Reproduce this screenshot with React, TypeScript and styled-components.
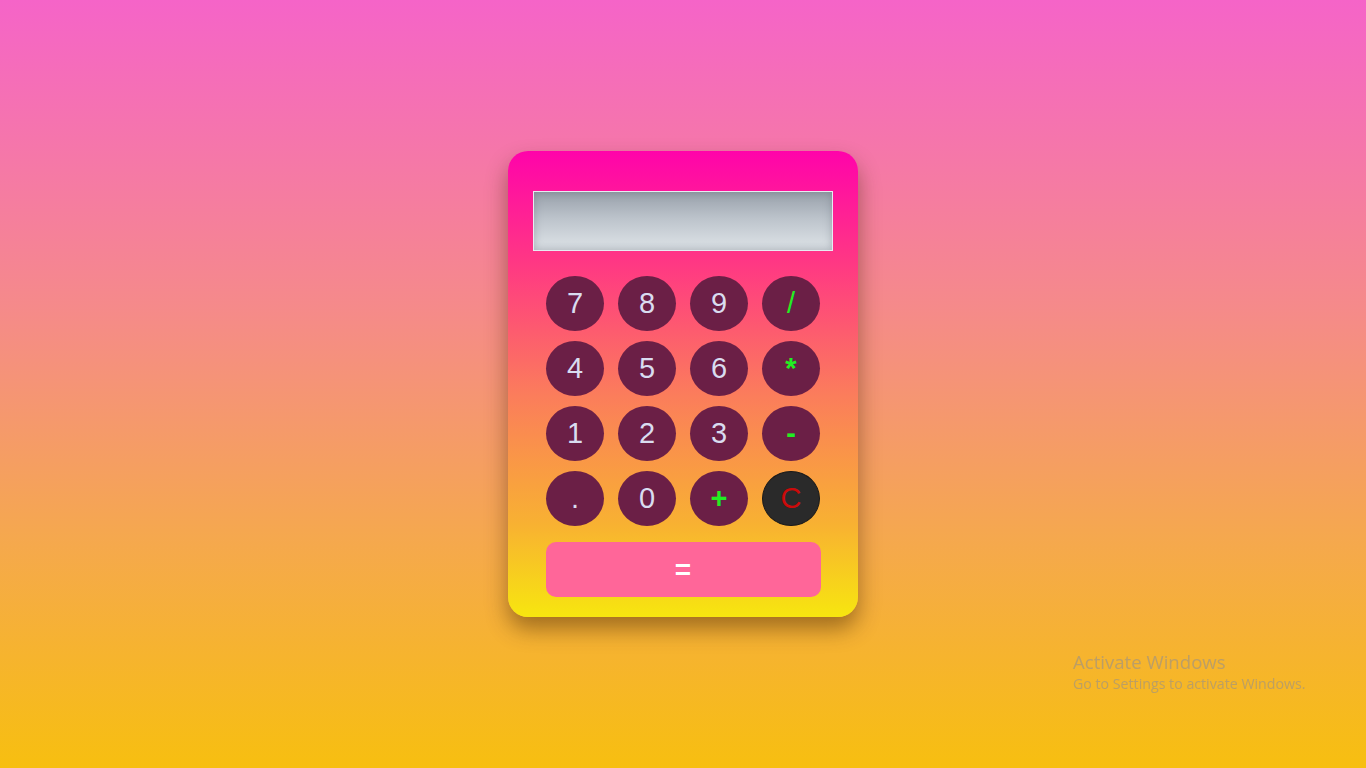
import React from "react";
import styled, { createGlobalStyle } from "styled-components";

const Global = createGlobalStyle`
  html, body { margin: 0; padding: 0; height: 100%; }
  body {
    font-family: "Liberation Sans", Arial, sans-serif;
    background: linear-gradient(180deg, #f564c8 0%, #f58a8a 40%, #f5a84e 70%, #f7bf10 100%);
    min-height: 100vh;
  }
  #root { height: 100vh; }
`;

const Page = styled.div`
  height: 100vh;
  display: flex;
  align-items: center;
  justify-content: center;
`;

const Calc = styled.div`
  width: 350px;
  height: 466px;
  box-sizing: border-box;
  padding: 40px 25px 20px;
  border-radius: 20px;
  background: linear-gradient(180deg, #ff03aa 0%, #ff3a82 25%, #fb7c5c 52%, #f8b132 80%, #f7e60f 100%);
  box-shadow: 0 12px 22px rgba(60, 30, 0, 0.45);
  display: flex;
  flex-direction: column;
  align-items: center;
`;

const Display = styled.div`
  width: 300px;
  height: 60px;
  box-sizing: border-box;
  border: 1px solid #e6ecf2;
  background: linear-gradient(180deg, #98a0aa 0%, #bcc3cb 45%, #d5dbe0 85%, #d6dce1 100%);
  box-shadow: inset 0 0 8px rgba(80, 90, 100, 0.35);
`;

const Keys = styled.div`
  margin-top: 25px;
  display: grid;
  grid-template-columns: repeat(4, 58px);
  grid-auto-rows: 55px;
  column-gap: 14px;
  row-gap: 10px;
`;

type Kind = "num" | "op" | "clear";

const Key = styled.div<{ $kind?: Kind; $bold?: boolean }>`
  border-radius: 50%;
  box-sizing: border-box;
  display: flex;
  align-items: center;
  justify-content: center;
  font-size: 29px;
  line-height: 1;
  font-weight: ${(p) => (p.$bold ? 700 : 400)};
  background: ${(p) => (p.$kind === "clear" ? "#2a2a2a" : "#6b1f46")};
  color: ${(p) =>
    p.$kind === "op" ? "#22ee22" : p.$kind === "clear" ? "#cc0a0a" : "#d9dcf0"};
  border: ${(p) => (p.$kind === "clear" ? "1px solid #1a1a1a" : "none")};
`;

const Equals = styled.div`
  margin-top: 16px;
  width: 275px;
  height: 55px;
  border-radius: 10px;
  background: #ff6699;
  color: #ffffff;
  font-size: 28px;
  font-weight: 700;
  display: flex;
  align-items: center;
  justify-content: center;
`;

const Watermark = styled.div`
  position: fixed;
  left: 1073px;
  top: 650px;
  font-family: "Open Sans", "Noto Sans", sans-serif;
  color: rgba(140, 140, 150, 0.55);
`;

const WmTitle = styled.div`
  font-size: 18.6px;
  line-height: 24px;
`;

const WmSub = styled.div`
  font-size: 14.2px;
  line-height: 20px;
`;

type K = { label: string; kind: Kind; bold?: boolean };

const keys: K[] = [
  { label: "7", kind: "num" },
  { label: "8", kind: "num" },
  { label: "9", kind: "num" },
  { label: "/", kind: "op" },
  { label: "4", kind: "num" },
  { label: "5", kind: "num" },
  { label: "6", kind: "num" },
  { label: "*", kind: "op", bold: true },
  { label: "1", kind: "num" },
  { label: "2", kind: "num" },
  { label: "3", kind: "num" },
  { label: "-", kind: "op", bold: true },
  { label: ".", kind: "num" },
  { label: "0", kind: "num" },
  { label: "+", kind: "op", bold: true },
  { label: "C", kind: "clear" },
];

export default function App() {
  return (
    <>
      <Global />
      <Page>
        <Calc>
          <Display />
          <Keys>
            {keys.map((k) => (
              <Key key={k.label} $kind={k.kind} $bold={k.bold}>
                {k.label}
              </Key>
            ))}
          </Keys>
          <Equals>=</Equals>
        </Calc>
      </Page>
      <Watermark>
        <WmTitle>Activate Windows</WmTitle>
        <WmSub>Go to Settings to activate Windows.</WmSub>
      </Watermark>
    </>
  );
}
